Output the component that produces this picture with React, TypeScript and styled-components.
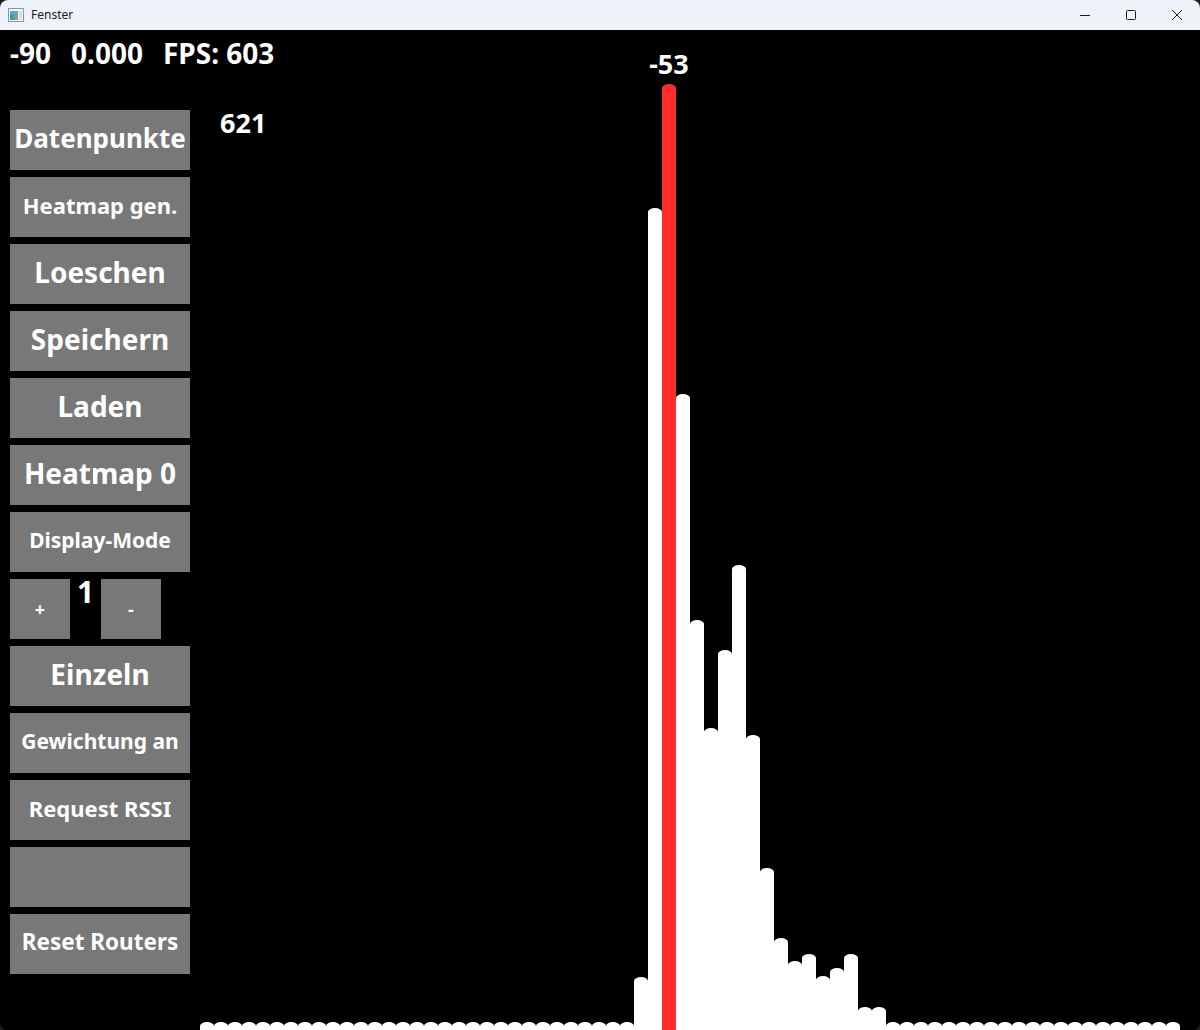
import React from "react";
import styled, { createGlobalStyle } from "styled-components";

const GlobalStyle = createGlobalStyle`
  html, body { margin: 0; padding: 0; background: #1c1c1c; }
  #root { width: 1200px; height: 1030px; }
`;

const Window = styled.div`
  width: 1200px;
  height: 1030px;
  display: flex;
  flex-direction: column;
  border-radius: 8px;
  overflow: hidden;
  background: #000;
`;

const TitleBar = styled.div`
  height: 30px;
  flex: none;
  display: flex;
  align-items: center;
  background: #eef2f9;
  font-family: "Noto Sans", "DejaVu Sans", sans-serif;
  font-size: 12px;
  color: #1b1b1b;
`;

const AppIcon = styled.svg`
  margin-left: 8px;
  margin-right: 7px;
  flex: none;
`;

const Title = styled.span`
  flex: 1;
  line-height: 30px;
`;

const Control = styled.div`
  width: 46px;
  height: 30px;
  display: flex;
  align-items: center;
  justify-content: center;
`;

const Content = styled.div`
  flex: 1;
  display: flex;
  background: #000;
  color: #fff;
  font-family: "Noto Sans", "Open Sans", sans-serif;
  font-weight: 700;
`;

const Sidebar = styled.div`
  width: 200px;
  flex: none;
  box-sizing: border-box;
  padding: 10px 0 0 10px;
  display: flex;
  flex-direction: column;
`;

const Stats = styled.div`
  display: flex;
  gap: 20px;
  white-space: nowrap;
  font-size: 28px;
  line-height: 27px;
  margin-bottom: 43px;
`;

const ButtonStack = styled.div`
  display: flex;
  flex-direction: column;
  gap: 7px;
  width: 180px;
`;

const Button = styled.div<{ $size: number }>`
  height: 60px;
  box-sizing: border-box;
  padding-bottom: 5px;
  background: #787878;
  display: flex;
  align-items: center;
  justify-content: center;
  font-size: ${(p) => p.$size}px;
  white-space: nowrap;
  color: #fff;
`;

const StepRow = styled.div`
  display: flex;
  height: 60px;
`;

const StepButton = styled(Button)`
  width: 60px;
  padding-bottom: 0;
`;

const Counter = styled.div`
  width: 31px;
  display: flex;
  justify-content: center;
  font-size: 30px;
  line-height: 30px;
  margin-top: -2px;
`;

const ChartArea = styled.div`
  width: 980px;
  flex: none;
  display: grid;
  grid-template: 1fr / 1fr;
`;

const CountLabel = styled.div`
  grid-area: 1 / 1;
  align-self: start;
  padding: 80px 0 0 20px;
  font-size: 27px;
  line-height: 26px;
`;

const BarRow = styled.div`
  grid-area: 1 / 1;
  display: flex;
  align-items: flex-end;
`;

const BarColumn = styled.div`
  width: 14px;
  flex: none;
  display: flex;
  flex-direction: column;
  align-items: center;
`;

const BarLabel = styled.div`
  font-size: 27px;
  line-height: 27px;
  margin-bottom: 7px;
  white-space: nowrap;
`;

const Bar = styled.div<{ $active?: boolean }>`
  width: 14px;
  flex: none;
  background: ${(p) => (p.$active ? "#fe2b2b" : "#ffffff")};
  border-radius: 7px 7px 0 0 / 4px 4px 0 0;
`;

const heights: number[] = Array.from({ length: 70 }, () => 8);
const overrides: Record<number, number> = {
  31: 53,
  32: 822,
  33: 946,
  34: 636,
  35: 410,
  36: 302,
  37: 380,
  38: 465,
  39: 295,
  40: 162,
  41: 92,
  42: 69,
  43: 76,
  44: 54,
  45: 62,
  46: 76,
  47: 23,
  48: 23,
};
Object.entries(overrides).forEach(([k, v]) => {
  heights[Number(k)] = v;
});
const ACTIVE = 33;

const buttons: { label: string; size: number }[] = [
  { label: "Datenpunkte", size: 26 },
  { label: "Heatmap gen.", size: 22 },
  { label: "Loeschen", size: 28 },
  { label: "Speichern", size: 28 },
  { label: "Laden", size: 28 },
  { label: "Heatmap 0", size: 28 },
  { label: "Display-Mode", size: 21 },
];

const buttons2: { label: string; size: number }[] = [
  { label: "Einzeln", size: 28 },
  { label: "Gewichtung an", size: 21 },
  { label: "Request RSSI", size: 22 },
  { label: "", size: 21 },
  { label: "Reset Routers", size: 22.5 },
];

export default function App() {
  return (
    <>
      <GlobalStyle />
      <Window>
        <TitleBar>
          <AppIcon width="16" height="14" viewBox="0 0 16 14">
            <rect x="0.5" y="0.5" width="15" height="13" fill="#f4f6f8" stroke="#8a96a3" />
            <rect x="2" y="3" width="8" height="9" fill="#4a8fb8" />
            <rect x="2" y="3" width="8" height="4" fill="#5fa7c9" />
            <rect x="6" y="7" width="4" height="5" fill="#6fae7c" />
            <rect x="11" y="3" width="3" height="9" fill="#d8dde3" />
          </AppIcon>
          <Title>Fenster</Title>
          <Control>
            <svg width="10" height="10" viewBox="0 0 10 10">
              <line x1="0" y1="5.5" x2="10" y2="5.5" stroke="#1b1b1b" strokeWidth="1" />
            </svg>
          </Control>
          <Control>
            <svg width="10" height="10" viewBox="0 0 10 10">
              <rect x="0.5" y="0.5" width="9" height="9" rx="1" fill="none" stroke="#1b1b1b" strokeWidth="1" />
            </svg>
          </Control>
          <Control>
            <svg width="10" height="10" viewBox="0 0 10 10">
              <path d="M0 0 L10 10 M10 0 L0 10" stroke="#1b1b1b" strokeWidth="1" />
            </svg>
          </Control>
        </TitleBar>
        <Content>
          <Sidebar>
            <Stats>
              <span>-90</span>
              <span>0.000</span>
              <span>FPS: 603</span>
            </Stats>
            <ButtonStack>
              {buttons.map((b) => (
                <Button key={b.label} $size={b.size}>
                  {b.label}
                </Button>
              ))}
              <StepRow>
                <StepButton $size={18}>+</StepButton>
                <Counter>1</Counter>
                <StepButton $size={18}>-</StepButton>
              </StepRow>
              {buttons2.map((b, i) => (
                <Button key={i} $size={b.size}>
                  {b.label}
                </Button>
              ))}
            </ButtonStack>
          </Sidebar>
          <ChartArea>
            <CountLabel>621</CountLabel>
            <BarRow>
              {heights.map((h, i) => (
                <BarColumn key={i}>
                  {i === ACTIVE && <BarLabel>-53</BarLabel>}
                  <Bar $active={i === ACTIVE} style={{ height: h }} />
                </BarColumn>
              ))}
            </BarRow>
          </ChartArea>
        </Content>
      </Window>
    </>
  );
}
